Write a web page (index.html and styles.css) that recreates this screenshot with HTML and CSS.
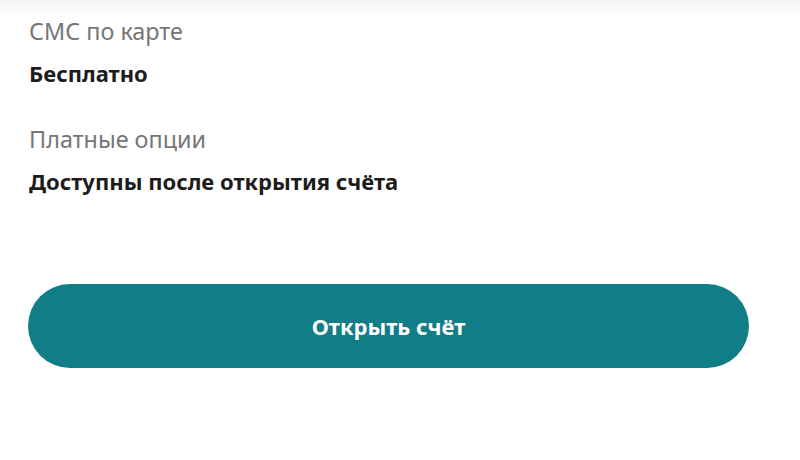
FILE: index.html
```html
<!DOCTYPE html>
<html lang="ru">
<head>
<meta charset="utf-8">
<link rel="stylesheet" href="styles.css">
</head>
<body>
<div class="page">
  <div class="top-shade"></div>
  <div class="content">
    <div class="field">
      <div class="label">СМС по карте</div>
      <div class="value">Бесплатно</div>
    </div>
    <div class="field">
      <div class="label">Платные опции</div>
      <div class="value">Доступны после открытия счёта</div>
    </div>
    <button class="btn">Открыть счёт</button>
  </div>
</div>
</body>
</html>
```
FILE: styles.css
```css
html, body {
  margin: 0;
  padding: 0;
  background: #ffffff;
}
body {
  font-family: "Noto Sans", "Open Sans", sans-serif;
  width: 800px;
  height: 460px;
  overflow: hidden;
}
.page {
  position: relative;
  height: 460px;
}
.top-shade {
  position: absolute;
  left: 0;
  right: 0;
  top: 0;
  height: 18px;
  background: linear-gradient(to bottom, #f3f3f3, rgba(255,255,255,0));
}
.content {
  display: flex;
  flex-direction: column;
  padding: 17px 51px 0 29px;
}
.field {
  display: flex;
  flex-direction: column;
  gap: 14px;
  margin-bottom: 38px;
}
.field:last-of-type {
  margin-bottom: 0;
}
.label {
  font-size: 23.4px;
  line-height: 28px;
  color: #767676;
}
.value {
  font-size: 22px;
  line-height: 28px;
  font-weight: 700;
  color: #1c1c1c;
}
.btn {
  margin-top: 89px;
  margin-left: -1px;
  height: 84px;
  border: none;
  border-radius: 42px;
  background: #117d87;
  color: #ffffff;
  font-family: "Noto Sans", "Open Sans", sans-serif;
  font-size: 22px;
  font-weight: 700;
  cursor: pointer;
}
```
